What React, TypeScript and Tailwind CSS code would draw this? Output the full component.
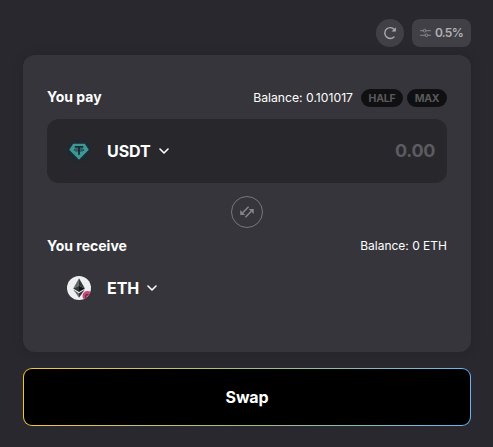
import type { ReactNode } from "react";

const Chevron = () => (
  <svg width="10" height="6" viewBox="0 0 10 6" fill="none">
    <path
      d="M1 1l4 4 4-4"
      stroke="white"
      strokeWidth="1.6"
      strokeLinecap="round"
      strokeLinejoin="round"
    />
  </svg>
);

const RefreshIcon = () => (
  <svg width="14" height="14" viewBox="0 0 14 14" fill="none">
    <path
      d="M11 10.9A5.4 5.4 0 1 1 11.2 3.4"
      stroke="#a9a9ad"
      strokeWidth="1.4"
      strokeLinecap="round"
    />
    <path d="M12.9 1.2v4.4H8.5z" fill="#a9a9ad" />
  </svg>
);

const SlidersIcon = () => (
  <svg width="11" height="10" viewBox="0 0 12 10" fill="none" stroke="#8e8e92">
    <path d="M0.5 2.5h3M6.5 2.5h5M0.5 7.5h5M8.5 7.5h3" strokeLinecap="round" />
    <circle cx="5" cy="2.5" r="1.5" />
    <circle cx="7" cy="7.5" r="1.5" />
  </svg>
);

const SwitchIcon = () => (
  <svg width="14" height="12" viewBox="0 0 14 12" fill="none">
    <path
      d="M8.6 0.8L2.8 6.6M5.4 11.2l5.8-5.8"
      stroke="#858589"
      strokeWidth="1.5"
    />
    <path d="M0.2 4v5h5zM13.8 8V3h-5z" fill="#858589" />
  </svg>
);

const TetherIcon = () => (
  <svg width="24" height="24" viewBox="0 0 24 24">
    <circle cx="12" cy="12" r="11.5" fill="#212930" />
    <path d="M6.2 4.8h11.6l4 6L12 20.8l-9.8-10z" fill="#3c9896" />
    <path
      d="M7.7 7.8h8.6M12 7.8v8"
      stroke="#1d2a30"
      strokeWidth="1.8"
      fill="none"
    />
    <ellipse
      cx="12"
      cy="11"
      rx="4.8"
      ry="1.1"
      stroke="#1d2a30"
      strokeWidth="0.9"
      fill="none"
    />
  </svg>
);

const EthIcon = () => (
  <svg width="24" height="24" viewBox="0 0 24 24">
    <defs>
      <clipPath id="coin">
        <circle cx="12" cy="12" r="12" />
      </clipPath>
    </defs>
    <circle cx="12" cy="12" r="12" fill="#eeeff1" />
    <path d="M12 2.2L6.2 12.4 12 9.7z" fill="#65686b" />
    <path d="M12 2.2l5.9 10.2L12 9.7z" fill="#34373a" />
    <path d="M6.2 12.4L12 9.7v6.2z" fill="#343739" />
    <path d="M17.9 12.4L12 9.7v6.2z" fill="#121517" />
    <path d="M6.2 13.6L12 17.2v4.6z" fill="#6c7073" />
    <path d="M17.9 13.6L12 17.2v4.6z" fill="#303336" />
    <g clipPath="url(#coin)">
      <circle cx="20.5" cy="20" r="5" fill="#c84778" />
      <path
        d="M18.5 22.5v-2.2q0-1.8 3-1.8"
        stroke="#713052"
        strokeWidth="1.3"
        fill="none"
      />
    </g>
  </svg>
);

const Pill = ({ children, className }: { children: ReactNode; className: string }) => (
  <button
    className={`flex h-[18px] items-center justify-center rounded-full bg-[#101012] pt-px text-[10.5px] font-bold tracking-[-0.02em] text-[#59595c] ${className}`}
  >
    {children}
  </button>
);

const App = () => {
  return (
    <main className="flex h-[447px] w-[493px] flex-col bg-[#29282e] pl-[23px] pr-[22px] pt-[19px] font-['Inter',sans-serif] text-white">
      <div className="flex justify-end gap-2">
        <button className="flex size-7 items-center justify-center rounded-full bg-[#414046]">
          <RefreshIcon />
        </button>
        <button className="flex h-7 w-[59px] items-center justify-center gap-1 rounded-lg bg-[#414046] text-xs font-semibold tracking-[-0.06em] text-[#b0b0b4]">
          <SlidersIcon />
          0.5%
        </button>
      </div>

      <section className="mt-2 flex h-[297px] flex-col rounded-xl bg-[#36353b] px-6 pt-8 shadow-[0_0_12px_rgba(0,0,0,0.12)]">
        <div className="flex h-[22px] items-center">
          <h2 className="pb-0.5 text-sm font-bold">You pay</h2>
          <span className="ml-auto mr-2 text-[12.2px]">
            Balance: 0.101017
          </span>
          <Pill className="mr-1 w-[42px]">HALF</Pill>
          <Pill className="w-10">MAX</Pill>
        </div>

        <div className="mt-2.5 flex h-16 items-center rounded-xl bg-[#28272c] pl-5 pr-3">
          <TetherIcon />
          <span className="ml-4 mr-2 text-base font-bold tracking-[-0.005em]">
            USDT
          </span>
          <Chevron />
          <span className="ml-auto text-lg font-bold tracking-[-0.02em] text-[#5c5b60]">
            0.00
          </span>
        </div>

        <button className="mt-[13px] flex size-8 shrink-0 items-center justify-center self-center rounded-full border border-[#77777b]">
          <SwitchIcon />
        </button>

        <div className="mt-2 flex h-5 items-center justify-between">
          <h2 className="text-sm font-bold">You receive</h2>
          <span className="text-xs">Balance: 0 ETH</span>
        </div>

        <div className="flex h-16 items-center pl-5">
          <EthIcon />
          <span className="ml-4 mr-2 text-base font-bold tracking-[-0.005em]">
            ETH
          </span>
          <Chevron />
        </div>
      </section>

      <div className="mt-4 h-[58px] rounded-[9px] bg-gradient-to-r from-[#f4c62e] via-[#a4bd78] to-[#67b4f1] p-px">
        <button className="flex size-full items-center justify-center rounded-lg bg-black text-base font-bold tracking-[-0.01em]">
          Swap
        </button>
      </div>
    </main>
  );
};

export default App;
